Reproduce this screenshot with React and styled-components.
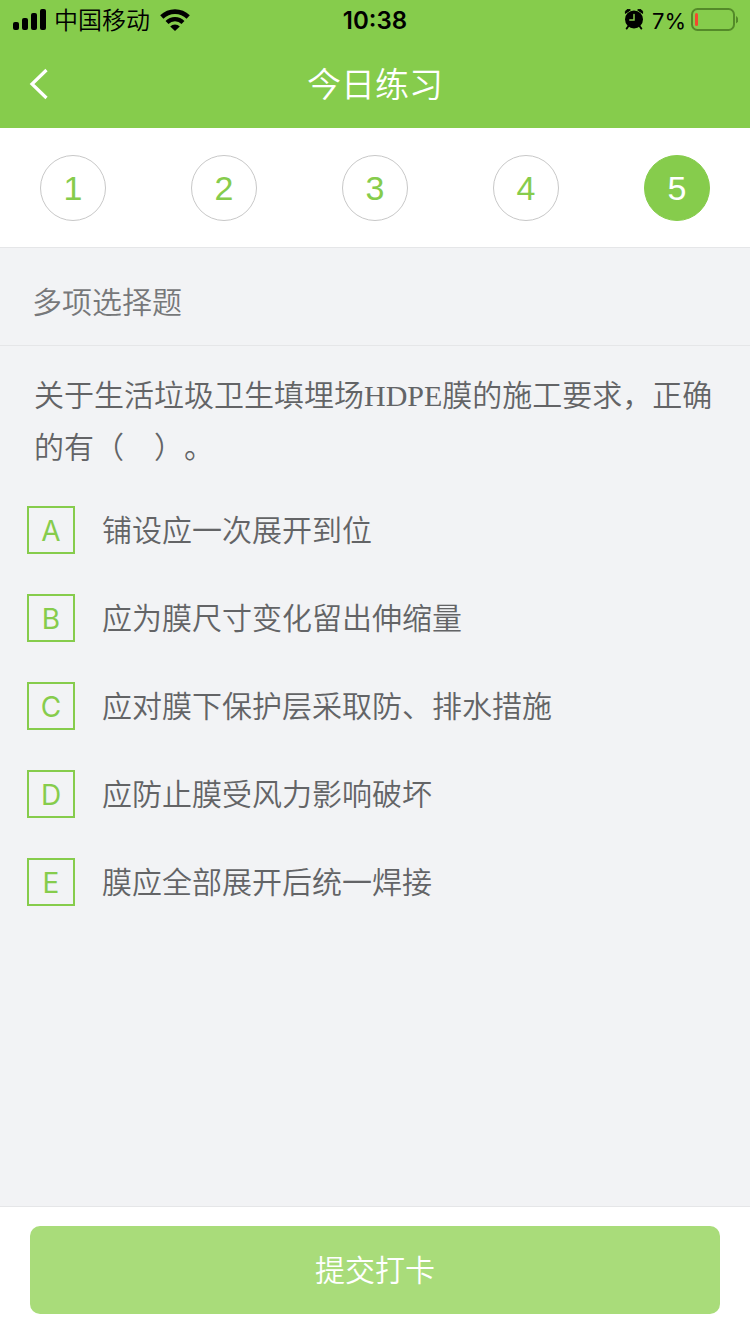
import React, { useState } from 'react';
import styled, { createGlobalStyle } from 'styled-components';

const GREEN = '#86cc4c';

const GlobalStyle = createGlobalStyle`
  * {
    box-sizing: border-box;
  }

  body {
    margin: 0;
    font-family: Inter, "Noto Sans CJK SC", sans-serif;
    background: #f2f3f5;
    text-spacing-trim: space-all;
  }

  button,
  input {
    font: inherit;
    margin: 0;
  }
`;

const Page = styled.div`
  display: flex;
  flex-direction: column;
  min-height: 100vh;
`;

const Header = styled.header`
  background: ${GREEN};
`;

const StatusBar = styled.div`
  display: grid;
  grid-template-columns: 1fr auto 1fr;
  align-items: center;
  height: 40px;
  padding: 0 12px;
  font-size: 24px;
  line-height: 42px;
  color: #000;
`;

const StatusGroup = styled.div`
  display: flex;
  align-items: center;
  justify-content: ${props => props.$end ? 'flex-end' : 'flex-start'};
  gap: 8px;
`;

const Carrier = styled.span`
  font-weight: 350;
`;

const Battery = styled.span`
  display: flex;
  align-items: center;
  gap: 4px;
  font-size: 22px;
`;

const Clock = styled.time`
  font-weight: 600;
`;

const NavBar = styled.div`
  display: grid;
  grid-template-columns: 80px 1fr 80px;
  align-items: center;
  height: 88px;
`;

const BackButton = styled.button`
  display: flex;
  align-items: center;
  height: 88px;
  padding: 0 0 0 28px;
  border: 0;
  background: none;
  color: #fff;
  cursor: pointer;
`;

const Title = styled.h1`
  margin: 0;
  padding-top: 2px;
  font-size: 34px;
  font-weight: 350;
  line-height: 86px;
  text-align: center;
  color: #fff;
`;

const Steps = styled.nav`
  display: flex;
  align-items: center;
  justify-content: space-between;
  height: 120px;
  padding: 0 40px;
  background: #fff;
  border-bottom: 1px solid #e5e6e8;
`;

const Step = styled.button`
  width: 66px;
  height: 66px;
  padding: 0;
  border: 1px solid ${props => props.$active ? GREEN : '#c8c8c8'};
  border-radius: 50%;
  background: ${props => props.$active ? GREEN : '#fff'};
  color: ${props => props.$active ? '#fff' : GREEN};
  font-family: "Liberation Sans", sans-serif;
  font-size: 34px;
  line-height: 64px;
  cursor: pointer;
`;

const Content = styled.main`
  flex: 1;
`;

const QuestionType = styled.h2`
  margin: 0;
  padding: 0 32px;
  border-bottom: 1px solid #e5e6e8;
  font-size: 30px;
  font-weight: 350;
  line-height: 108px;
  height: 98px;
  color: #77787a;
`;

const Fieldset = styled.fieldset`
  margin: 0;
  padding: 0;
  border: 0;
  min-width: 0;
`;

const Question = styled.legend`
  padding: 24px 34px 12px;
  font-family: "Liberation Serif", "Noto Sans CJK SC", serif;
  font-size: 30px;
  font-weight: 350;
  line-height: 52px;
  color: #636466;
`;

const Option = styled.label`
  display: flex;
  align-items: center;
  gap: 27px;
  padding: 20px 27px;
  font-size: 30px;
  font-weight: 350;
  line-height: 48px;
  color: #636466;
  cursor: pointer;
`;

const LetterBox = styled.span`
  display: grid;
  flex: none;
  width: 48px;
  height: 48px;
`;

const Checkbox = styled.input`
  grid-area: 1 / 1;
  appearance: none;
  width: 48px;
  height: 48px;
  border: 2px solid ${GREEN};
  cursor: pointer;

  &:checked {
    background: ${GREEN};
  }
`;

const Letter = styled.span`
  grid-area: 1 / 1;
  z-index: 1;
  font-size: 28px;
  font-weight: 400;
  line-height: 50px;
  text-align: center;
  color: ${props => props.$checked ? '#fff' : GREEN};
`;

const Footer = styled.footer`
  padding: 19px 30px 20px;
  background: #fff;
  border-top: 1px solid #e5e6e8;
`;

const SubmitButton = styled.button`
  display: block;
  width: 100%;
  height: 88px;
  padding: 0;
  border: 0;
  border-radius: 10px;
  background: #a9dc7a;
  color: #fff;
  font-size: 30px;
  font-weight: 350;
  line-height: 88px;
  cursor: pointer;
`;

const steps = [1, 2, 3, 4, 5];

const question = '关于生活垃圾卫生填埋场HDPE膜的施工要求，正确的有（\u3000）。';

const options = [
    { key: 'A', text: '铺设应一次展开到位' },
    { key: 'B', text: '应为膜尺寸变化留出伸缩量' },
    { key: 'C', text: '应对膜下保护层采取防、排水措施' },
    { key: 'D', text: '应防止膜受风力影响破坏' },
    { key: 'E', text: '膜应全部展开后统一焊接' },
];

const SignalIcon = () => (
    <svg width="34" height="24" viewBox="0 0 34 24" aria-hidden="true">
        <rect x="1" y="13" width="6" height="8" rx="2" />
        <rect x="10" y="9" width="6" height="12" rx="2" />
        <rect x="19" y="4" width="6" height="17" rx="2" />
        <rect x="28" y="0" width="6" height="21" rx="2" />
    </svg>
);

const WifiIcon = () => (
    <svg width="32" height="24" viewBox="0 0 32 24" aria-hidden="true">
        <path d="M3.8 8a18.8 18.8 0 0 1 26.4 0" fill="none" stroke="#000" strokeWidth="4.6" />
        <path d="M9 13.5a11.4 11.4 0 0 1 16 0" fill="none" stroke="#000" strokeWidth="4.2" />
        <path d="M17 22l-4.8-4.6a6.8 6.8 0 0 1 9.6 0z" />
    </svg>
);

const AlarmIcon = () => (
    <svg width="20" height="24" viewBox="0 0 20 24" aria-hidden="true">
        <path d="M1.4 4.4A3.2 3.2 0 0 1 6.4 1zM18.6 4.4A3.2 3.2 0 0 0 13.6 1z" stroke="#000" strokeLinejoin="round" />
        <path d="M4.5 17L2.6 19.6M15.5 17l1.9 2.6" stroke="#000" strokeWidth="1.8" strokeLinecap="round" />
        <circle cx="10" cy="10.4" r="9" />
        <path d="M10 5.4V11H5.8" fill="none" stroke={GREEN} strokeWidth="1.5" strokeLinecap="round" />
    </svg>
);

const BatteryIcon = () => (
    <svg width="48" height="26" viewBox="0 0 48 26" aria-hidden="true">
        <rect x="2" y="1" width="42" height="21" rx="5.5" fill="none" stroke="#548a29" strokeWidth="2" />
        <path d="M46 8c3 1.5 3 6 0 7.5z" fill="#548a29" />
        <rect x="5" y="5" width="3" height="13" rx="1.5" fill="#f4482f" />
    </svg>
);

const App = () => {
    const [current, setCurrent] = useState(5);
    const [selected, setSelected] = useState([]);

    const toggle = (key) => {
        setSelected(prev => prev.includes(key) ? prev.filter(k => k !== key) : [...prev, key]);
    };

    return (
        <Page>
            <GlobalStyle />
            <Header>
                <StatusBar>
                    <StatusGroup>
                        <SignalIcon />
                        <Carrier>中国移动</Carrier>
                        <WifiIcon />
                    </StatusGroup>
                    <Clock>10:38</Clock>
                    <StatusGroup $end>
                        <AlarmIcon />
                        <Battery>
                            7%
                            <BatteryIcon />
                        </Battery>
                    </StatusGroup>
                </StatusBar>
                <NavBar>
                    <BackButton aria-label="返回">
                        <svg width="22" height="32" viewBox="0 0 22 32" fill="none" stroke="currentColor" strokeWidth="3.2">
                            <path d="M18.5 2L4 16l14.5 14" />
                        </svg>
                    </BackButton>
                    <Title>今日练习</Title>
                </NavBar>
            </Header>

            <Steps>
                {steps.map(n => (
                    <Step key={n} $active={n === current} onClick={() => setCurrent(n)}>{n}</Step>
                ))}
            </Steps>

            <Content>
                <QuestionType>多项选择题</QuestionType>
                <Fieldset>
                    <Question>{question}</Question>
                    {options.map(option => (
                        <Option key={option.key}>
                            <LetterBox>
                                <Checkbox
                                    type="checkbox"
                                    checked={selected.includes(option.key)}
                                    onChange={() => toggle(option.key)}
                                />
                                <Letter $checked={selected.includes(option.key)}>{option.key}</Letter>
                            </LetterBox>
                            {option.text}
                        </Option>
                    ))}
                </Fieldset>
            </Content>

            <Footer>
                <SubmitButton>提交打卡</SubmitButton>
            </Footer>
        </Page>
    );
};

export default App;
